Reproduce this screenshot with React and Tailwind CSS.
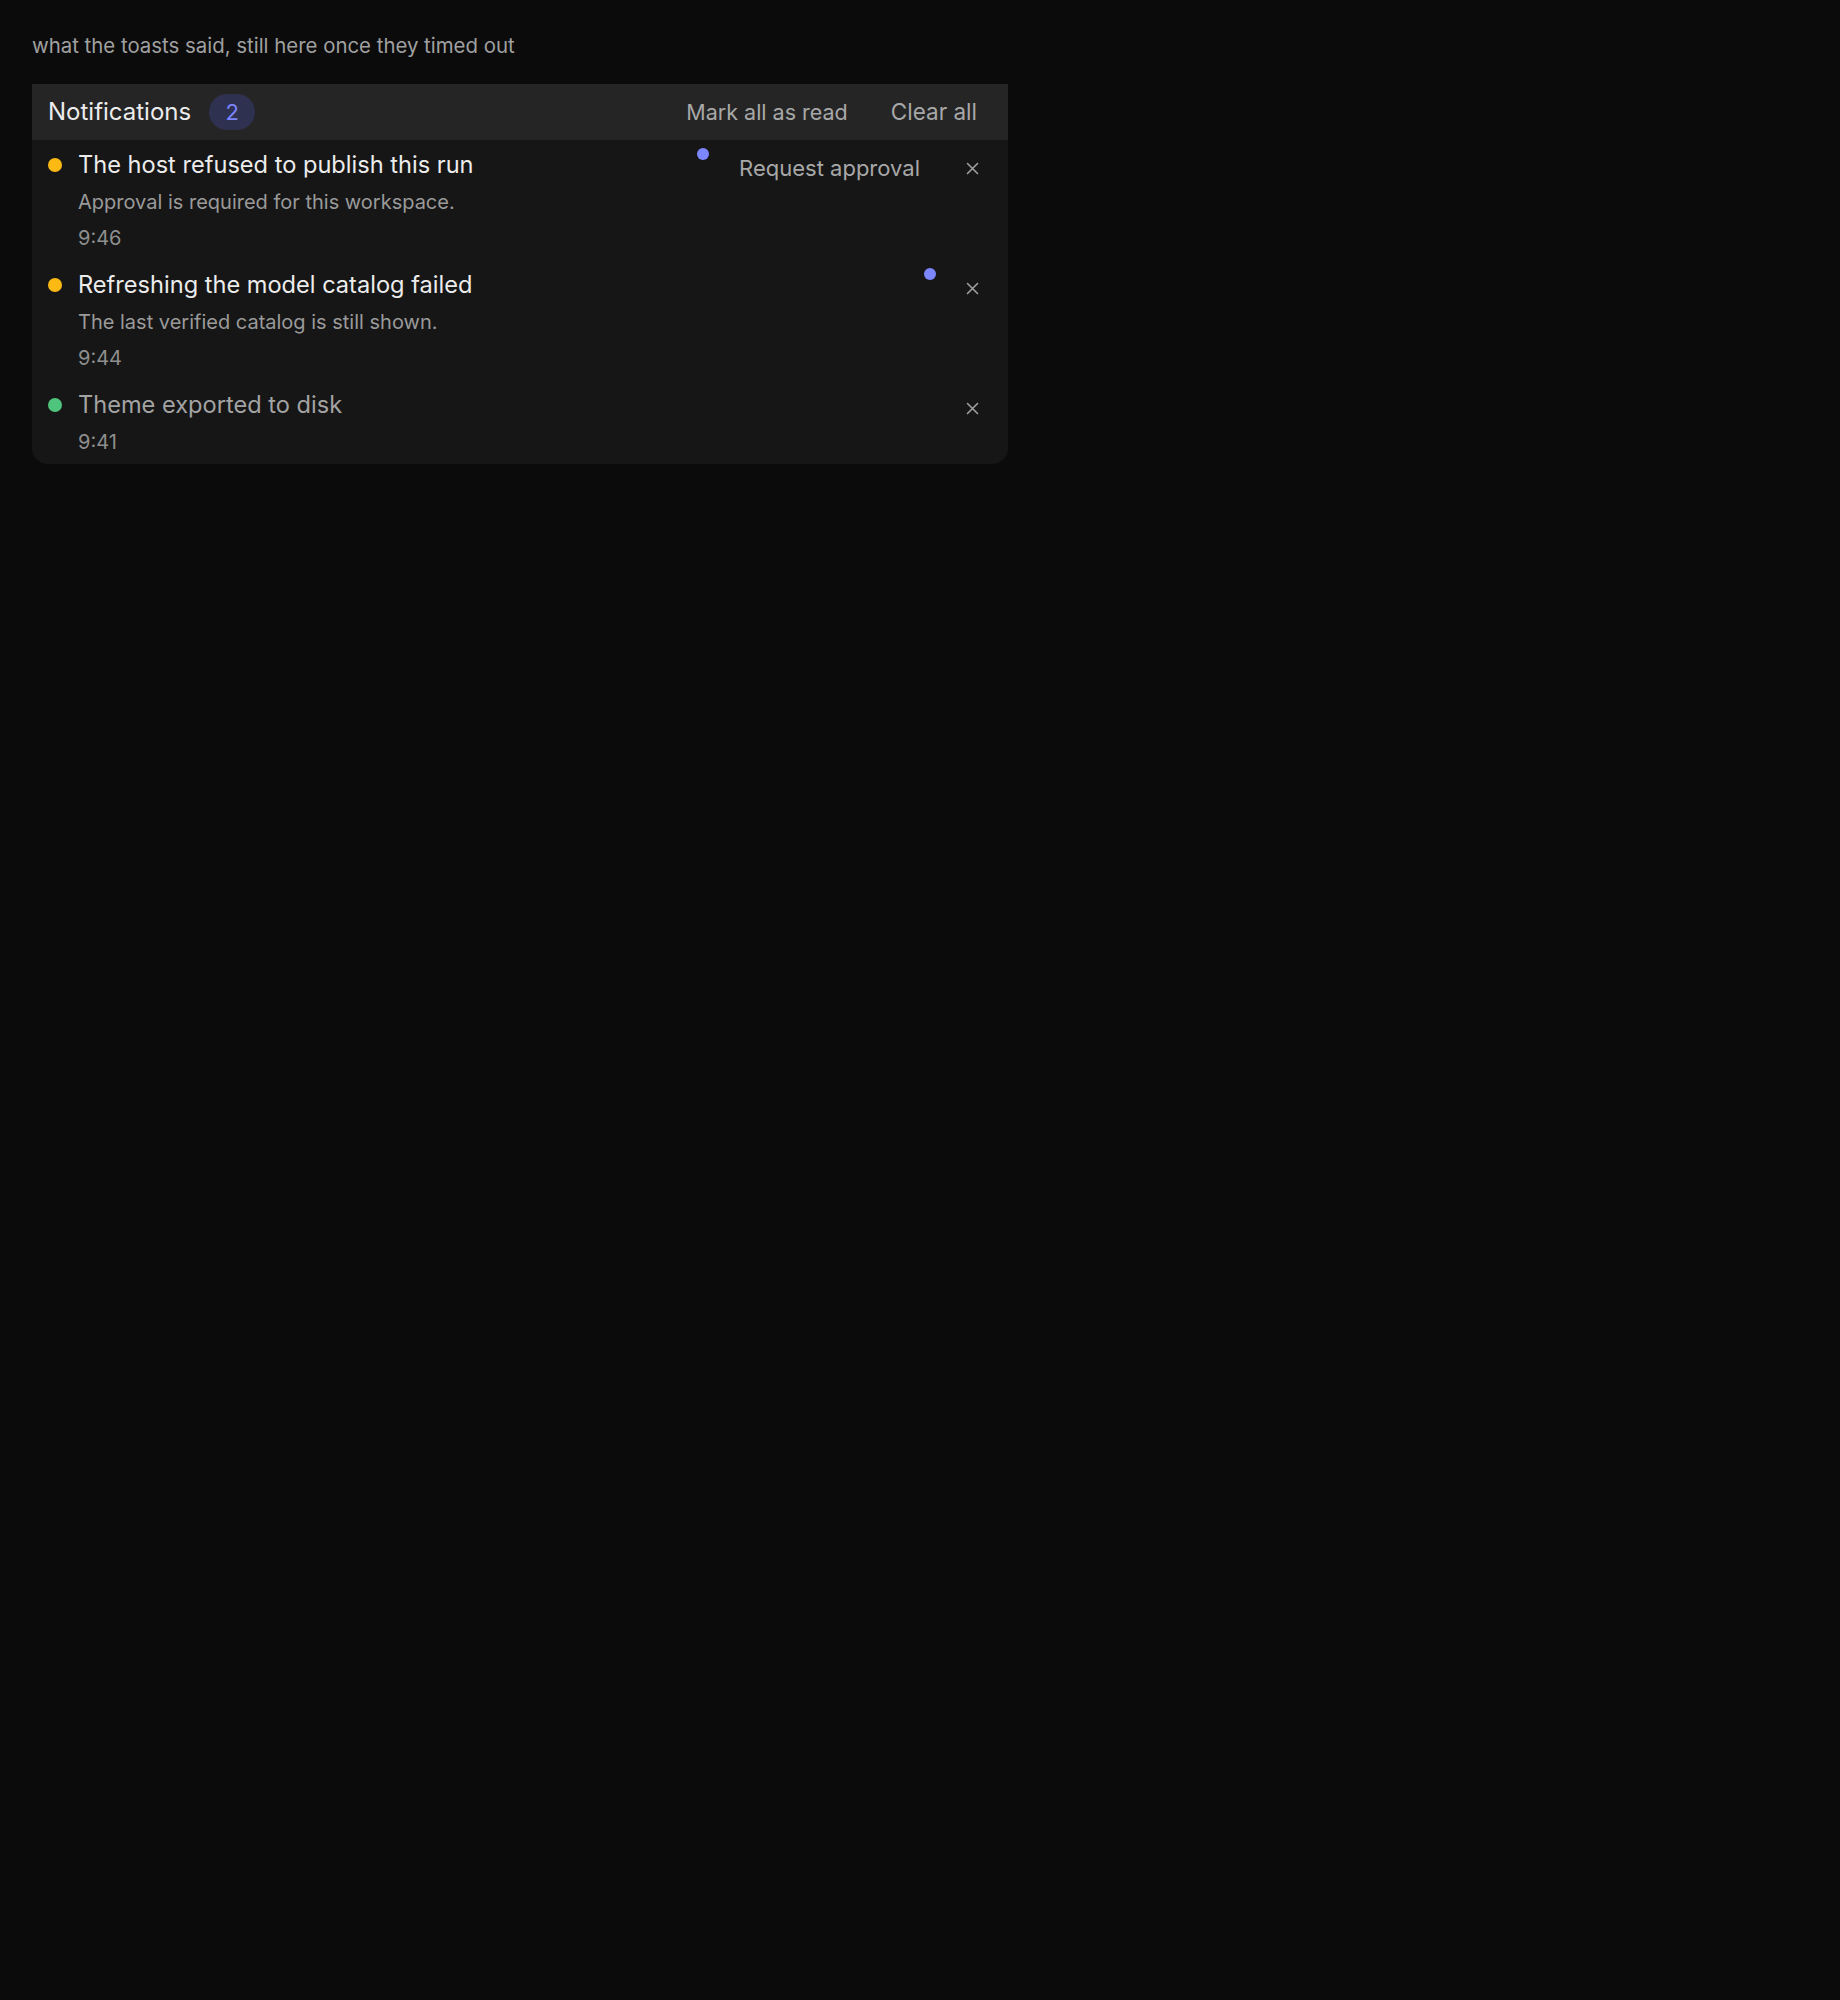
import React from "react";

const ITEMS = [
  { id: 1, tone: "bg-[#fdb913]", title: "The host refused to publish this run", body: "Approval is required for this workspace.", time: "9:46", unread: true, action: "Request approval" },
  { id: 2, tone: "bg-[#fdb913]", title: "Refreshing the model catalog failed", body: "The last verified catalog is still shown.", time: "9:44", unread: true },
  { id: 3, tone: "bg-[#4fc47c]", title: "Theme exported to disk", time: "9:41", unread: false },
];

function CloseIcon() {
  return (
    <svg width="13" height="13" viewBox="0 0 13 13" fill="none" stroke="currentColor" strokeWidth="1.6" strokeLinecap="round">
      <path d="M1.5 1.5l10 10M11.5 1.5l-10 10" />
    </svg>
  );
}

export default function App() {
  return (
    <div className="min-h-screen bg-[#0b0b0b] px-[32px] pt-[31px] font-['Inter',sans-serif]">
      <p className="text-[20.4px] leading-[30px] text-[#a0a0a0]">what the toasts said, still here once they timed out</p>

      <div className="mt-[23px] w-[976px] rounded-b-[16px] bg-[#161616]">
        {/* header */}
        <div className="flex h-[56px] items-center bg-[#252525] pl-[16px] pr-[31px]">
          <span className="text-[24px] text-[#ececec]">Notifications</span>
          <span className="ml-[18px] flex h-[36px] w-[46px] items-center justify-center rounded-full bg-[#2e3150] text-[22px] text-[#7c85ff]">2</span>
          <div className="ml-auto flex items-center gap-[43px] text-[21.5px] text-[#a8a8a8]">
            <button>Mark all as read</button>
            <button className="text-[22.5px]">Clear all</button>
          </div>
        </div>

        {ITEMS.map(n => (
          <div key={n.id} className="flex items-start pl-[16px] pr-[26px] pt-[8px] pb-[4px]">
            <span className={`mt-[10px] h-[14px] w-[14px] shrink-0 rounded-full ${n.tone}`} />
            <div className="ml-[16px] min-w-0 flex-1">
              <p className={`text-[23.6px] leading-[34px] ${n.unread ? "text-[#ececec]" : "text-[#a3a3a3]"}`}>{n.title}</p>
              {n.body && <p className="mt-[2px] text-[20px] leading-[36px] text-[#9a9a9a]">{n.body}</p>}
              <p className={`${n.body ? "" : "mt-[2px]"} text-[20px] leading-[36px] text-[#8f8f8f]`}>{n.time}</p>
            </div>
            <div className="flex items-start">
              {n.unread && <span className="h-[12px] w-[12px] rounded-full bg-[#7c86ff]" />}
              {n.action && (
                <button className="ml-[30px] mt-[3px] text-[22px] leading-[34px] text-[#a8a8a8]">{n.action}</button>
              )}
              <button className={`mt-[10px] flex h-[20px] w-[20px] items-center justify-center text-[#a0a0a0] ${n.action ? "ml-[42px]" : n.unread ? "ml-[26px]" : ""}`}>
                <CloseIcon />
              </button>
            </div>
          </div>
        ))}
      </div>
    </div>
  );
}
